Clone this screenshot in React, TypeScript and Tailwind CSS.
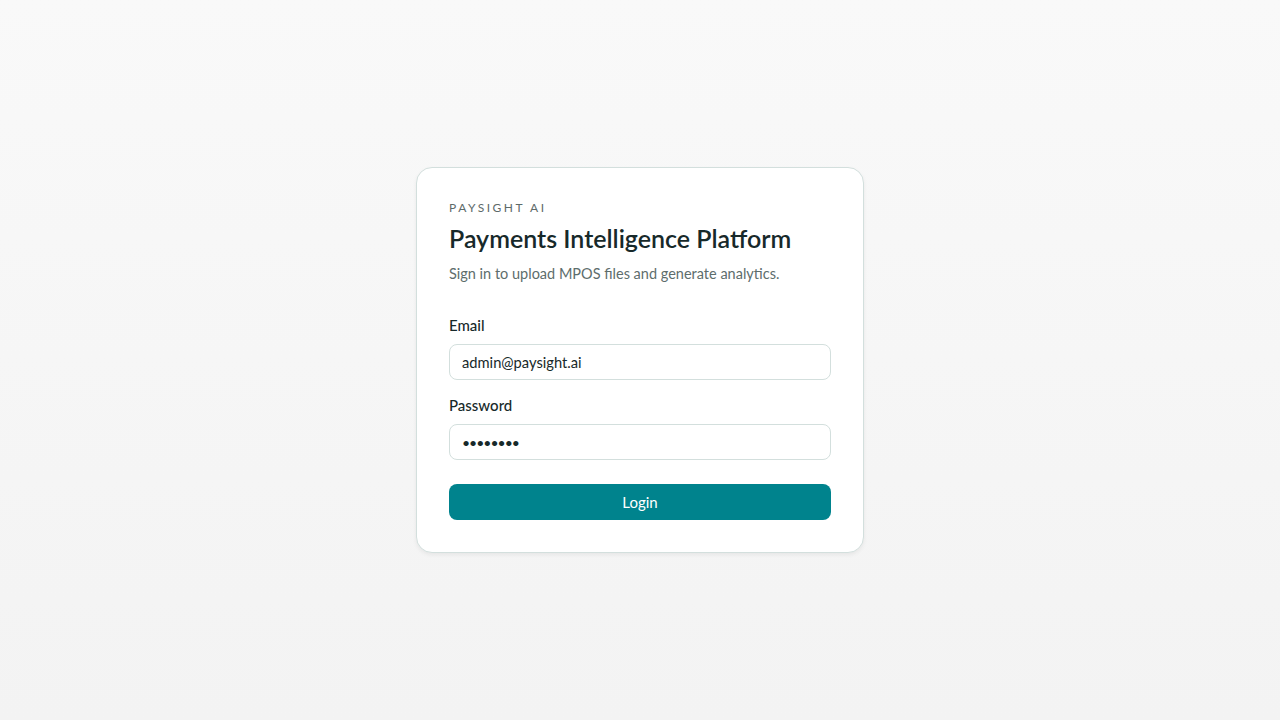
import React from 'react';

const App = () => {
  return (
    <div
      className="min-h-screen w-full flex items-center justify-center bg-gradient-to-b from-[#f9f9f9] to-[#f3f3f3]"
      style={{ fontFamily: 'Lato, "Noto Sans", sans-serif' }}
    >
      <div className="w-[448px] bg-white border border-[#d3dfdd] rounded-2xl shadow-[0_2px_4px_rgba(0,0,0,0.06)] px-8 pt-8 pb-8">
        <p className="text-[12px] leading-4 tracking-[0.21em] text-[#5d6a69]">PAYSIGHT AI</p>
        <h1 className="mt-[6px] text-[25px] leading-8 font-semibold text-[#17292a]">
          Payments Intelligence Platform
        </h1>
        <p className="mt-[10px] text-[14.5px] leading-5 text-[#5d6d6c]">
          Sign in to upload MPOS files and generate analytics.
        </p>

        <form className="mt-[31px]" onSubmit={(e) => e.preventDefault()}>
          <label className="block text-[15px] leading-5 font-medium text-[#17292a]">Email</label>
          <input
            type="email"
            defaultValue="admin@paysight.ai"
            className="mt-[9px] block w-full h-9 rounded-lg border border-[#d3dfdd] px-3 text-[14.7px] text-[#17292a] outline-none"
          />
          <label className="block mt-[15px] text-[15px] leading-5 font-medium text-[#17292a]">Password</label>
          <input
            type="password"
            defaultValue="password"
            className="mt-[9px] block w-full h-9 rounded-lg border border-[#d3dfdd] px-3 text-[14px] tracking-[-1px] text-[#17292a] outline-none"
          />
          <button
            type="submit"
            className="mt-6 w-full h-9 rounded-lg bg-[#00838d] text-white text-[15px]"
          >
            Login
          </button>
        </form>
      </div>
    </div>
  );
};

export default App;
